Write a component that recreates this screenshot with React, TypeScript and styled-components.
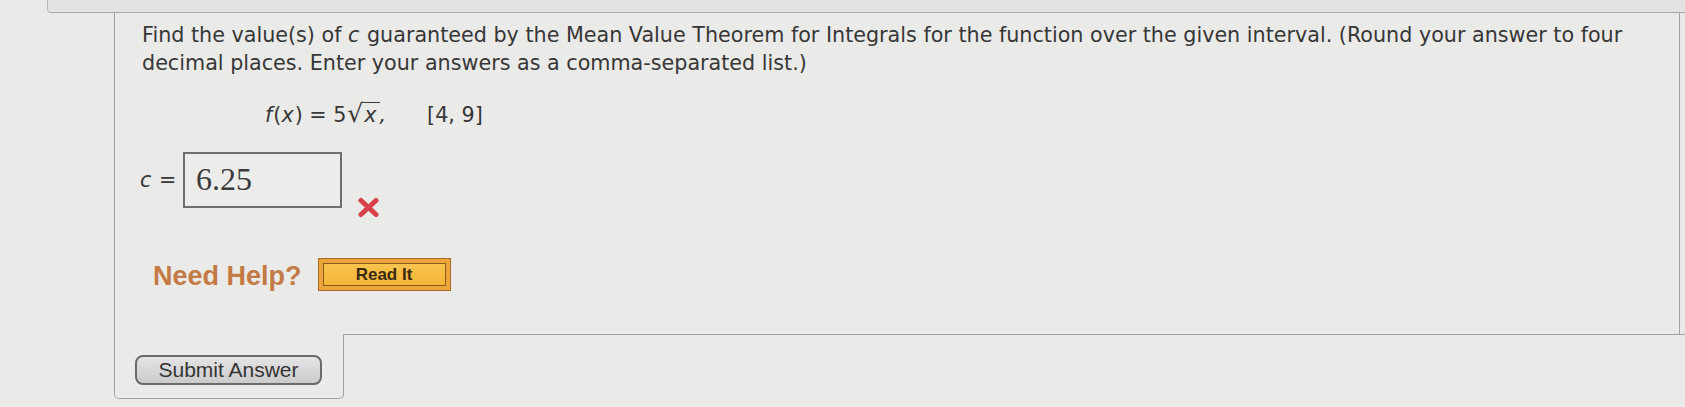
import React from "react";
import styled, { createGlobalStyle } from "styled-components";

const Global = createGlobalStyle`
  html, body {
    margin: 0;
    padding: 0;
    background: #e9e9e7;
  }
  body {
    width: 1685px;
    height: 407px;
    overflow: hidden;
    font-family: "DejaVu Sans", Verdana, sans-serif;
    color: #373737;
  }
`;

const Page = styled.div`
  display: flex;
  flex-direction: column;
  width: 1685px;
`;

const TopStrip = styled.div`
  height: 12px;
  margin-left: 47px;
  background: #e2e2e0;
  border-left: 1px solid #b9b9b7;
  border-bottom: 1px solid #a8a8a6;
  border-bottom-left-radius: 4px;
`;

const Panel = styled.div`
  margin-left: 114px;
  width: 1566px;
  box-sizing: border-box;
  border-left: 1px solid #a3a3a1;
  border-right: 1px solid #a3a3a1;
  padding: 8px 0 41px 27px;
  background: #eaeae8;
`;

const Prompt = styled.p`
  margin: 0;
  font-size: 20.7px;
  line-height: 28px;
  width: 1525px;
`;

const Em = styled.i`
  font-style: italic;
  padding-right: 1px;
`;

const Formula = styled.div`
  margin: 23px 0 0 123px;
  font-size: 20.7px;
  line-height: 28px;
  display: flex;
  align-items: baseline;
`;

const Sqrt = styled.span`
  display: inline-flex;
  align-items: baseline;
  margin-left: 1px;
`;

const Radical = styled.span`
  font-size: 25px;
`;

const Radicand = styled.span`
  border-top: 1.5px solid #3a3a3a;
  padding: 0 2px 0 1px;
  line-height: 24px;
`;

const Interval = styled.span`
  margin-left: 40px;
`;

const AnswerRow = styled.div`
  margin-top: 23px;
  display: flex;
  align-items: flex-start;
`;

const Label = styled.span`
  font-size: 20.7px;
  line-height: 56px;
  margin-left: -2px;
  width: 43px;
`;

const AnswerBox = styled.div`
  width: 159px;
  height: 56px;
  box-sizing: border-box;
  border: 2px solid #6e6e6c;
  background: #ececea;
  padding-left: 11px;
  font-family: "Liberation Serif", "Times New Roman", serif;
  font-size: 32px;
  line-height: 50px;
  color: #3c3c3c;
`;

const WrongMark = styled.svg`
  margin: 45px 0 0 15px;
  width: 23px;
  height: 21px;
`;

const HelpRow = styled.div`
  margin-top: 38px;
  display: flex;
  align-items: center;
  gap: 16px;
  padding-left: 11px;
`;

const HelpText = styled.span`
  font-family: "Liberation Sans", Arial, sans-serif;
  font-weight: bold;
  font-size: 27px;
  color: #c47a44;
  line-height: 33px;
  padding-top: 4px;
`;

const ReadIt = styled.button`
  width: 133px;
  height: 33px;
  box-sizing: border-box;
  border: 1px solid #a86c22;
  background: linear-gradient(#f9c851, #f3b132);
  box-shadow: inset 0 0 0 4px #eda53b, inset 0 0 0 5px #8c5a1c;
  font-family: "Liberation Sans", Arial, sans-serif;
  font-weight: bold;
  font-size: 17px;
  color: #3b2a12;
  padding: 0;
  cursor: pointer;
`;

const Footer = styled.div`
  display: flex;
  margin-left: 114px;
`;

const Tab = styled.div`
  width: 230px;
  height: 65px;
  box-sizing: border-box;
  border-left: 1px solid #a3a3a1;
  border-right: 1px solid #a3a3a1;
  border-bottom: 1px solid #a3a3a1;
  border-radius: 0 0 5px 5px;
  background: #eaeae8;
  padding: 21px 0 0 20px;
`;

const Rest = styled.div`
  flex: 1;
  border-top: 1px solid #a3a3a1;
`;

const SubmitButton = styled.button`
  width: 187px;
  height: 30px;
  box-sizing: border-box;
  border: 2px solid #6a6a6a;
  border-radius: 8px;
  background: linear-gradient(#e4e4e4, #cbcbcb);
  font-family: "Liberation Sans", Arial, sans-serif;
  font-size: 21px;
  line-height: 24px;
  color: #343434;
  padding: 0;
  cursor: pointer;
`;

export default function App() {
  return (
    <>
      <Global />
      <Page>
        <TopStrip />
        <Panel>
          <Prompt>
            Find the value(s) of <Em>c</Em> guaranteed by the Mean Value Theorem for Integrals for the
            function over the given interval. (Round your answer to four decimal places. Enter your
            answers as a comma-separated list.)
          </Prompt>
          <Formula>
            <span>
              <Em>f</Em>(<Em>x</Em>) = 5
            </span>
            <Sqrt>
              <Radical>√</Radical>
              <Radicand>
                <Em>x</Em>
              </Radicand>
            </Sqrt>
            <Em>,</Em>
            <Interval>[4, 9]</Interval>
          </Formula>
          <AnswerRow>
            <Label>
              <Em>c</Em> =
            </Label>
            <AnswerBox>6.25</AnswerBox>
            <WrongMark viewBox="0 0 23 21">
              <path
                d="M4 3.5 L19 17.5 M19 3.5 L4 17.5"
                stroke="#d8404c"
                strokeWidth="5"
                strokeLinecap="round"
              />
            </WrongMark>
          </AnswerRow>
          <HelpRow>
            <HelpText>Need Help?</HelpText>
            <ReadIt>Read It</ReadIt>
          </HelpRow>
        </Panel>
        <Footer>
          <Tab>
            <SubmitButton>Submit Answer</SubmitButton>
          </Tab>
          <Rest />
        </Footer>
      </Page>
    </>
  );
}
